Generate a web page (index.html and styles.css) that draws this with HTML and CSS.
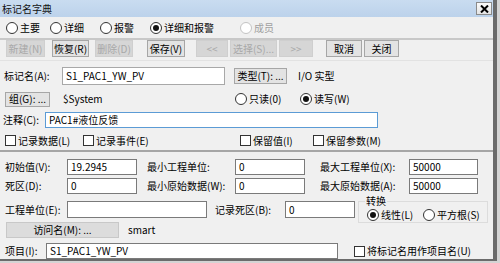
FILE: index.html
```html
<!DOCTYPE html>
<html lang="zh">
<head>
<meta charset="utf-8">
<link rel="stylesheet" href="styles.css">
</head>
<body>
<div class="win">
  <div class="titlebar">
    <span class="title">标记名字典</span>
    <span class="close"><svg width="9" height="8" viewBox="0 0 9 8"><path d="M1 0.5 L8 7.5 M8 0.5 L1 7.5" stroke="#000" stroke-width="2"/></svg></span>
  </div>

  <div class="tabs">
    <span class="opt w44"><i class="radio"></i>主要</span>
    <span class="opt w50"><i class="radio"></i>详细</span>
    <span class="opt w50"><i class="radio"></i>报警</span>
    <span class="opt w90"><i class="radio on"></i>详细和报警</span>
    <span class="opt dis"><i class="radio dis"></i>成员</span>
  </div>
  <div class="sep"></div>

  <div class="toolbar">
    <span class="btn dis b1">新建(N)</span>
    <span class="btn b2">恢复(R)</span>
    <span class="btn dis b3">删除(D)</span>
    <span class="btn b4">保存(V)</span>
    <span class="btn dis b5">&lt;&lt;</span>
    <span class="btn dis b6">选择(S)...</span>
    <span class="btn dis b7">&gt;&gt;</span>
    <span class="btn b8">取消</span>
    <span class="btn b9">关闭</span>
  </div>
  <div class="sep2"></div>

  <div class="row rowA">
    <span class="lbl la">标记名(A):</span>
    <span class="field fa">S1_PAC1_YW_PV</span>
    <span class="btn bt">类型(T): ...</span>
    <span class="txt tio">I/O 实型</span>
  </div>
  <div class="row rowB">
    <span class="btn bg">组(G): ...</span>
    <span class="txt tsys">$System</span>
    <span class="opt ro"><i class="radio"></i>只读(0)</span>
    <span class="opt"><i class="radio on"></i>读写(W)</span>
  </div>
  <div class="row rowC">
    <span class="lbl lc">注释(C):</span>
    <span class="field focus fc">PAC1#液位反馈</span>
  </div>
  <div class="row rowD">
    <span class="opt c1"><i class="check"></i>记录数据(L)</span>
    <span class="opt c2"><i class="check"></i>记录事件(E)</span>
    <span class="opt c3"><i class="check"></i>保留值(I)</span>
    <span class="opt"><i class="check"></i>保留参数(M)</span>
  </div>

  <div class="sep3"></div>

  <div class="row r1">
    <span class="lbl l1">初始值(V):</span>
    <span class="field dk f70">19.2945</span>
    <span class="lbl l2">最小工程单位:</span>
    <span class="field dk f70">0</span>
    <span class="lbl l3">最大工程单位(X):</span>
    <span class="field dk f69">50000</span>
  </div>
  <div class="row r2">
    <span class="lbl l1">死区(D):</span>
    <span class="field dk f70">0</span>
    <span class="lbl l2">最小原始数据(W):</span>
    <span class="field dk f70">0</span>
    <span class="lbl l3">最大原始数据(A):</span>
    <span class="field dk f69">50000</span>
  </div>

  <div class="split">
    <div class="leftcol">
      <div class="row r3">
        <span class="lbl l1">工程单位(E):</span>
        <span class="field dk f140"></span>
        <span class="lbl l4">记录死区(B):</span>
        <span class="field dk f70">0</span>
      </div>
      <div class="row r4">
        <span class="btn bacc">访问名(M): ...</span>
        <span class="txt tsm">smart</span>
      </div>
    </div>
    <fieldset class="group">
      <legend>转换</legend>
      <div class="grow">
        <span class="opt lin"><i class="radio on"></i>线性(L)</span>
        <span class="opt"><i class="radio"></i>平方根(S)</span>
      </div>
    </fieldset>
  </div>

  <div class="row r5">
    <span class="lbl l5">项目(I):</span>
    <span class="field dk f292">S1_PAC1_YW_PV</span>
    <span class="opt c5"><i class="check"></i>将标记名用作项目名(U)</span>
  </div>
</div>
</body>
</html>
```

FILE: styles.css
```css
* { box-sizing: border-box; }
html, body { margin: 0; padding: 0; }
body {
  background: #d4d4d4;
  font-family: "Noto Sans CJK SC", "Noto Sans", sans-serif;
  font-size: 10px;
  line-height: 12px;
  color: #000;
  width: 500px;
  height: 263px;
  overflow: hidden;
}
.win {
  width: 497px;
  height: 261px;
  background: #f0f0f0;
  border-right: 4px solid #6b6b6b;
  border-bottom: 2px solid #6b6b6b;
  overflow: hidden;
}

/* title bar */
.titlebar {
  height: 17px;
  background: linear-gradient(#c9dcf0, #bcd2eb);
  display: flex;
  align-items: center;
  justify-content: space-between;
  padding-left: 2px;
}
.title { color: #111; }
.close {
  width: 16px;
  height: 13px;
  margin-right: 1px;
  background: linear-gradient(#fafafa, #e4e4e4);
  border: 1px solid #8a8a8a;
  display: flex;
  align-items: center;
  justify-content: center;
}

/* option row */
.tabs {
  height: 21px;
  display: flex;
  align-items: center;
  padding-left: 6px;
}
.opt {
  display: inline-flex;
  align-items: center;
  white-space: nowrap;
}
.opt.dis { color: #a0a0a0; }
.w44 { width: 44px; }
.w50 { width: 50px; }
.w90 { width: 90px; }

.radio {
  display: inline-flex;
  align-items: center;
  justify-content: center;
  width: 12px;
  height: 12px;
  border: 1px solid #333;
  border-radius: 50%;
  background: #fff;
  margin-right: 2px;
  flex: none;
}
.radio.on::after {
  content: "";
  width: 6px;
  height: 6px;
  border-radius: 50%;
  background: #111;
}
.radio.dis { border-color: #c4c4c4; }
.check {
  display: inline-block;
  width: 11px;
  height: 11px;
  border: 1px solid #333;
  background: #fff;
  margin-right: 2px;
  flex: none;
}

.sep { height: 2px; background: #c8c8c8; }
.sep2 { height: 1px; background: #e2e2e2; margin-top: 3px; }
.sep3 { height: 2px; background: #a6a6a6; margin-top: 3px; }

/* buttons */
.toolbar {
  height: 17px;
  display: flex;
}
.btn {
  display: inline-flex;
  align-items: center;
  justify-content: center;
  height: 17px;
  background: #e3e3e3;
  border: 1px solid #a6a6a6;
  white-space: nowrap;
  flex: none;
}
.btn.dis {
  background: #d6d6d6;
  border-color: #cfcfcf;
  color: #a8a8a8;
}
.b1 { margin-left: 6px; width: 39px; }
.b2 { margin-left: 7px; width: 37px; }
.b3 { margin-left: 6px; width: 38px; }
.b4 { margin-left: 14px; width: 38px; }
.b5 { margin-left: 11px; width: 32px; }
.b6 { margin-left: 2px; width: 47px; }
.b7 { margin-left: 2px; width: 34px; }
.b8 { margin-left: 13px; width: 36px; }
.b9 { margin-left: 2px; width: 35px; }

/* generic rows */
.row { display: flex; align-items: center; }
.lbl { white-space: nowrap; flex: none; }
.txt { white-space: nowrap; }
.field {
  display: flex;
  align-items: center;
  height: 16px;
  background: #fff;
  border: 1px solid #a8a8a8;
  padding-left: 3px;
  white-space: nowrap;
  flex: none;
}
.field.dk { border-color: #7a7a7a; }
.field.focus { border-color: #5b9bd5; }

.rowA { height: 18px; margin-top: 6px; }
.la { padding-left: 4px; width: 62px; }
.fa { width: 163px; height: 18px; }
.bt { margin-left: 9px; width: 53px; height: 16px; }
.tio { margin-left: 11px; }

.rowB { height: 16px; margin-top: 6px; }
.bg { margin-left: 5px; width: 45px; height: 15px; }
.tsys { margin-left: 13px; width: 172px; }
.ro { width: 65px; }

.rowC { height: 16px; margin-top: 5px; }
.lc { padding-left: 3px; width: 45px; }
.fc { width: 333px; }

.rowD { height: 13px; margin-top: 6px; padding-left: 5px; }
.c1 { width: 78px; }
.c2 { width: 157px; }
.c3 { width: 73px; }

/* lower section */
.r1 { height: 16px; margin-top: 7px; }
.r2 { height: 16px; margin-top: 3px; }
.l1 { padding-left: 5px; width: 67px; }
.l2 { margin-left: 10px; width: 88px; }
.l3 { margin-left: 15px; width: 89px; }
.f70 { width: 70px; }
.f69 { width: 69px; }
.f140 { width: 140px; }

.split { display: flex; align-items: flex-start; }
.leftcol { width: 355px; flex: none; }
.r3 { height: 17px; margin-top: 7px; }
.r3 .field { height: 17px; }
.l4 { margin-left: 8px; width: 70px; }
.r4 { height: 16px; margin-top: 4px; }
.bacc { margin-left: 6px; width: 113px; height: 16px; background: #dcdcdc; border-color: #c8c8c8; }
.tsm { margin-left: 9px; }

.group {
  margin: 1px 0 0 3px;
  padding: 0;
  width: 130px;
  height: 28px;
  border: 1px solid #dcdcdc;
}
.group legend {
  padding: 0 1px;
  margin-left: 6px;
  line-height: 12px;
}
.grow { display: flex; align-items: center; padding-left: 8px; height: 15px; }
.lin { width: 56px; }

.r5 { height: 16px; margin-top: 5px; }
.l5 { padding-left: 5px; width: 46px; }
.f292 { width: 292px; }
.c5 { margin-left: 16px; }
```
